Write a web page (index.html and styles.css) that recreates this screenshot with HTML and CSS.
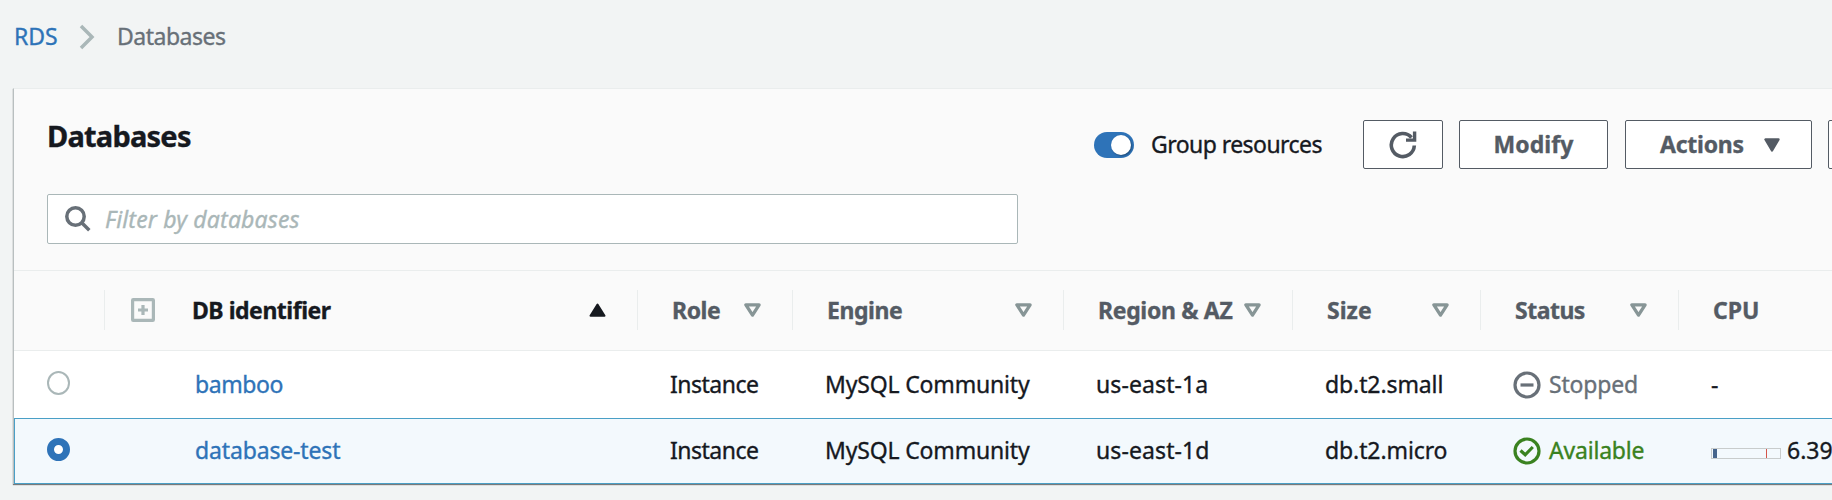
FILE: index.html
```html
<!DOCTYPE html>
<html lang="en">
<head>
<meta charset="utf-8">
<title>RDS Databases</title>
<link rel="stylesheet" href="styles.css">
</head>
<body>
<svg class="defs" aria-hidden="true">
  <symbol id="sort" viewBox="0 0 17 14"><path d="M1.900 1.800h13.200L8.500 12.100z" fill="none" stroke="#879596" stroke-width="3.300" stroke-linejoin="round"/></symbol>
</svg>
<nav class="breadcrumb">
  <a class="link t-rds">RDS</a>
  <svg class="chevron" width="16" height="26" viewBox="0 0 16 26"><path d="M2 2l11 11L2 24" fill="none" stroke="#aab7b8" stroke-width="3.500"/></svg>
  <span class="crumb t-crumb">Databases</span>
</nav>
<main class="panel">
  <header class="toolbar">
    <div class="left">
      <h1 class="t-title">Databases</h1>
      <div class="filter">
        <svg width="26" height="26" viewBox="0 0 26 26"><g fill="none" stroke="#687078" stroke-width="3.500"><circle cx="10.500" cy="10.500" r="8.700"/><path d="M16.500 16.500l7.800 7.800"/></g></svg>
        <span class="t-filter">Filter by databases</span>
      </div>
    </div>
    <div class="actions">
      <span class="toggle"></span>
      <span class="group t-group">Group resources</span>
      <button class="btn refresh"><svg width="28" height="28" viewBox="0 0 28 28"><g fill="none" stroke="#545b64" stroke-width="3.600"><path d="M25.300 14.500A11.500 11.500 0 1 1 22.500 6.500"/><path d="M25.600 .5V9.100H17" stroke-width="3.400"/></g></svg></button>
      <button class="btn modify"><span class="t-modify">Modify</span></button>
      <button class="btn menu"><span class="t-actions">Actions</span><svg width="16" height="14" viewBox="0 0 16 14"><path d="M1.500 1.500h13L8 12.500z" fill="#545b64" stroke="#545b64" stroke-width="2.400" stroke-linejoin="round"/></svg></button>
      <button class="btn next"></button>
    </div>
  </header>
  <section class="table">
    <div class="row head">
      <div class="cell"></div>
      <div class="cell id active">
        <svg class="plus" width="24" height="24" viewBox="0 0 24 24"><g fill="none" stroke="#aab7b8"><rect x="1.600" y="1.600" width="20.800" height="20.800" rx=".6" stroke-width="3.200"/><path d="M12 7v10M7 12h10" stroke-width="3.200"/></g></svg>
        <span class="t-dbid">DB identifier</span>
        <svg class="sort" width="17" height="14" viewBox="0 0 17 14"><path d="M1.500 12.700h14L8.500 1.500z" fill="#16191f" stroke="#16191f" stroke-width="2" stroke-linejoin="round"/></svg>
      </div>
      <div class="cell"><span class="t-role">Role</span><svg class="sort" width="17" height="14"><use href="#sort"/></svg></div>
      <div class="cell"><span class="t-engine">Engine</span><svg class="sort" width="17" height="14"><use href="#sort"/></svg></div>
      <div class="cell"><span class="t-region">Region &amp; AZ</span><svg class="sort" width="17" height="14"><use href="#sort"/></svg></div>
      <div class="cell"><span class="t-size">Size</span><svg class="sort" width="17" height="14"><use href="#sort"/></svg></div>
      <div class="cell"><span class="t-status">Status</span><svg class="sort" width="17" height="14"><use href="#sort"/></svg></div>
      <div class="cell"><span class="t-cpu">CPU</span></div>
    </div>
    <div class="row body">
      <div class="cell pick"><span class="radio"></span></div>
      <div class="cell id"><a class="link t-bamboo">bamboo</a></div>
      <div class="cell"><span class="t-inst">Instance</span></div>
      <div class="cell"><span class="t-mysql">MySQL Community</span></div>
      <div class="cell"><span class="t-east">us-east-1a</span></div>
      <div class="cell"><span class="t-small">db.t2.small</span></div>
      <div class="cell state stopped"><svg width="28" height="28" viewBox="0 0 28 28"><g fill="none" stroke="currentColor" stroke-width="3.200"><circle cx="14" cy="14" r="12"/><path d="M7.500 14h13"/></g></svg><span class="t-stop">Stopped</span></div>
      <div class="cell"><span>-</span></div>
    </div>
    <div class="row body selected">
      <div class="cell pick"><span class="radio on"></span></div>
      <div class="cell id"><a class="link t-test">database-test</a></div>
      <div class="cell"><span class="t-inst">Instance</span></div>
      <div class="cell"><span class="t-mysql">MySQL Community</span></div>
      <div class="cell"><span class="t-east">us-east-1d</span></div>
      <div class="cell"><span class="t-micro">db.t2.micro</span></div>
      <div class="cell state available"><svg width="28" height="28" viewBox="0 0 28 28"><g fill="none" stroke="currentColor" stroke-width="3.200"><circle cx="14" cy="14" r="12"/><path d="M7.500 13.500l4.700 4.300L19.800 10"/></g></svg><span class="t-avail">Available</span></div>
      <div class="cell cpu"><span class="meter"><i class="used"></i><i class="limit"></i></span><span class="t-pct">6.39</span></div>
    </div>
  </section>
</main>
</body>
</html>
```
FILE: styles.css
```css
* { box-sizing: border-box; }
body {
  margin: 0;
  height: 500px;
  overflow: hidden;
  background: #f2f4f4;
  color: #16191f;
  font: 23px/32px "Noto Sans", "Open Sans", sans-serif;
  -webkit-text-stroke: .35px currentColor;
  white-space: nowrap;
}
.defs { position: absolute; width: 0; height: 0; }
svg { flex: none; display: block; }
.link { color: #2e73b8; }
.breadcrumb { display: flex; align-items: center; height: 88px; padding: 0 0 14px 14px; }
.breadcrumb .t-rds { width: 65px; }
.breadcrumb span, .breadcrumb a { margin-top: -2px; }
.chevron { margin-right: 22px; }
.crumb { color: #687078; }
.panel {
  width: 1900px;
  margin-left: 13px;
  border-top: 1px solid #eaeded;
  border-left: 1px solid #b9bfc0;
  background: #fafafa;
  box-shadow: 0 1px 1px rgba(0, 0, 0, .5);
}
.toolbar { display: flex; height: 181px; padding: 31px 0 0 33px; }
.left { flex: none; width: 1047px; }
h1 { margin: 0; font-size: 29px; line-height: 32px; }
.filter {
  display: flex;
  align-items: center;
  width: 971px;
  height: 50px;
  margin-top: 42px;
  padding-left: 17px;
  gap: 14px;
  border: 1px solid #aab7b8;
  border-radius: 2px;
  background: #fff;
  color: #aab7b8;
  font-style: italic;
}
.actions { display: flex; flex: none; align-items: center; height: 49px; }
.toggle { width: 40px; height: 26px; padding: 3px; border-radius: 13px; background: #2e73b8; }
.toggle::after {
  content: "";
  display: block;
  width: 20px;
  height: 20px;
  margin-left: 14px;
  border-radius: 50%;
  background: #fff;
  box-shadow: 1px 1px 2px rgba(0, 0, 0, .35);
}
.group { width: 212px; margin: -1px 0 0 17px; }
.btn {
  display: flex;
  flex: none;
  align-items: center;
  justify-content: center;
  height: 49px;
  margin: 0 16px 0 0;
  padding: 0;
  border: 1px solid #545b64;
  border-radius: 2px;
  background: #fff;
  color: #545b64;
  font: bold 23px/32px "Noto Sans", "Open Sans", sans-serif;
}
.btn span { margin-top: -1px; }
.refresh { width: 80px; }
.modify { width: 149px; margin-right: 17px; }
.menu { width: 187px; justify-content: space-between; padding: 0 31px 0 34px; }
.next { width: 80px; }
.row { display: grid; grid-template-columns: 91px 533px 155px 271px 229px 188px 198px 1fr; }
.head { height: 81px; border-top: 1px solid #eaeded; border-bottom: 1px solid #eaeded; color: #545b64; font-weight: bold; }
.cell { display: flex; align-items: center; }
.head .cell { height: 40px; margin-top: 19px; padding: 0 31px 0 34px; border-right: 1px solid #eaeded; }
.head .cell:last-child { border: 0; }
.head .id { padding-left: 26px; }
.sort { margin-left: auto; }
.plus { margin-right: 37px; }
.active { color: #16191f; }
.body { height: 67px; background: #fff; }
.body .cell { padding-left: 32px; }
.body .cell > span:not(.radio):not(.meter), .body a { margin-top: -1px; }
.body .id { padding-left: 90px; }
.body .pick { padding: 0 0 4px 33px; }
.selected { height: 66px; border: 1px solid #4a9fc6; background: #f3f9fd; }
.selected .cell { margin-left: -1px; }
.selected .cell > span:not(.radio):not(.meter), .selected a { margin-top: -2px; }
.radio { width: 23px; height: 24px; border: 2px solid #aab7b8; border-radius: 50%; background: #fff; }
.radio.on { height: 23px; border: 7px solid #2e73b8; }
.state { gap: 8px; }
.stopped { color: #687078; }
.available { color: #3a8220; }
.meter { display: flex; width: 70px; height: 11px; margin: 4px 6px 0 0; border: 1px solid #c8cccc; }
.used { width: 4px; margin-left: 1px; background: #46658c; }
.limit { width: 1px; margin-left: 49px; background: #d4554a; }

/* Per-label tracking */
.t-crumb { letter-spacing: -.5px; }
.t-title { letter-spacing: -.78px; }
.t-filter { letter-spacing: .17px; }
.t-group { letter-spacing: -.56px; }
.t-modify { letter-spacing: .1px; }
.t-actions { letter-spacing: -.25px; }
.t-dbid { letter-spacing: -.48px; }
.t-role, .t-engine { letter-spacing: -.45px; }
.t-region { letter-spacing: -.33px; }
.t-status { letter-spacing: -.5px; }
.t-bamboo { letter-spacing: -.4px; }
.t-test { letter-spacing: -.15px; }
.t-inst { letter-spacing: -.5px; }
.t-mysql { letter-spacing: -.17px; }
.t-east { letter-spacing: .1px; }
.t-small, .t-micro { letter-spacing: -.1px; }
.t-stop, .t-avail { letter-spacing: -.2px; }
```
